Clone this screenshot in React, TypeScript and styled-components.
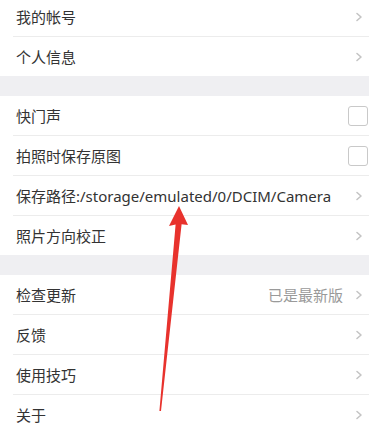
import styled, { createGlobalStyle } from 'styled-components';

const GlobalStyle = createGlobalStyle`
	html, body {
		margin: 0;
		padding: 0;
		background: #ffffff;
	}
	body {
		font-family: 'Noto Sans', 'Noto Sans CJK SC', sans-serif;
		-webkit-font-smoothing: antialiased;
	}
`;

interface Item {
	label: string;
	kind: 'link' | 'check';
	value?: string;
}

const groups: Item[][] = [
	[
		{ label: '我的帐号', kind: 'link' },
		{ label: '个人信息', kind: 'link' },
	],
	[
		{ label: '快门声', kind: 'check' },
		{ label: '拍照时保存原图', kind: 'check' },
		{ label: '保存路径:/storage/emulated/0/DCIM/Camera', kind: 'link' },
		{ label: '照片方向校正', kind: 'link' },
	],
	[
		{ label: '检查更新', kind: 'link', value: '已是最新版' },
		{ label: '反馈', kind: 'link' },
		{ label: '使用技巧', kind: 'link' },
		{ label: '关于', kind: 'link' },
	],
];

const Chevron = () => (
	<svg width='8' height='10' viewBox='0 0 8 10'>
		<polyline
			points='2,1.5 6,5 2,8.5'
			fill='none'
			stroke='#c4c4c4'
			strokeWidth='1.6'
			strokeLinecap='round'
			strokeLinejoin='round'
		/>
	</svg>
);

const App = () => {
	return (
		<>
			<GlobalStyle />
			<Page>
				<Settings>
					{groups.map((group, gi) => (
						<Group key={gi}>
							{group.map((item) => (
								<Row key={item.label}>
									<Label>{item.label}</Label>
									{item.value && <Value>{item.value}</Value>}
									{item.kind === 'check' ? <CheckBox /> : <Chevron />}
								</Row>
							))}
						</Group>
					))}
				</Settings>
				<Arrow
					width='369'
					height='430'
					viewBox='0 0 369 430'>
					<polygon
						points='179,206 169,226 175.6,224.5 159.4,411 161,411 181.6,224.3 188,225'
						fill='#e8322d'
					/>
				</Arrow>
			</Page>
		</>
	);
};

export default App;

const Page = styled.div`
	position: relative;
	width: 369px;
	height: 430px;
	overflow: hidden;
	background: #efeff2;
`;

const Settings = styled.div`
	display: flex;
	flex-direction: column;
	gap: 20px;
	margin-top: -3px;
`;

const Group = styled.div`
	background: #ffffff;
	display: flex;
	flex-direction: column;
`;

const Row = styled.div`
	display: flex;
	align-items: center;
	height: 40px;
	margin-left: 13px;
	padding: 0 6px 0 3px;
	border-bottom: 1px solid #ececec;
	box-sizing: border-box;

	&:last-child {
		border-bottom: none;
		height: 39px;
	}
`;

const Label = styled.span`
	flex: 1;
	font-size: 15px;
	color: #333333;
	white-space: nowrap;
`;

const Value = styled.span`
	font-size: 15px;
	color: #9a9a9a;
	margin-right: 12px;
`;

const CheckBox = styled.span`
	width: 18px;
	height: 18px;
	border: 1.5px solid #c9c9c9;
	border-radius: 3px;
	margin-right: -5px;
`;

const Arrow = styled.svg`
	position: absolute;
	left: 0;
	top: 0;
	pointer-events: none;
`;
